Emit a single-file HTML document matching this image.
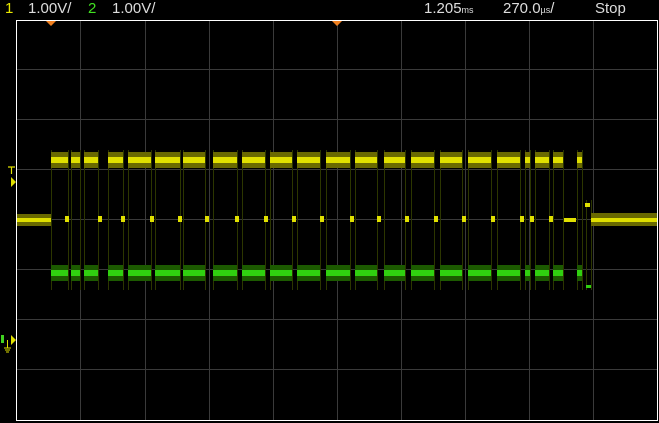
<!DOCTYPE html>
<html><head><style>
body{margin:0;background:#000;width:659px;height:423px;overflow:hidden;font-family:"Liberation Sans Narrow","Liberation Sans",sans-serif;}
.t{position:absolute;top:0px;font-size:15px;color:#ddd;line-height:18px;}
</style></head><body>
<div class="t" style="left:5px;color:#e8e800">1</div>
<div class="t" style="left:28px">1.00V/</div>
<div class="t" style="left:88px;color:#40e020">2</div>
<div class="t" style="left:112px">1.00V/</div>
<div class="t" style="left:424px">1.205<span style="font-size:9px">ms</span></div>
<div class="t" style="left:503px">270.0<span style="font-size:9px">µs</span>/</div>
<div class="t" style="left:595px">Stop</div>
<svg width="659" height="423" style="position:absolute;left:0;top:0">
<g stroke="#3a3a3a" stroke-width="1">
<path d="M80.5 20V420M145.5 20V420M209.5 20V420M273.5 20V420M337.5 20V420M401.5 20V420M465.5 20V420M529.5 20V420M593.5 20V420"/>
<path d="M16 69.5H657M16 119.5H657M16 169.5H657M16 219.5H657M16 269.5H657M16 319.5H657M16 369.5H657"/>
</g>
<rect x="16.5" y="20.5" width="641" height="400" fill="none" stroke="#fff" stroke-width="1"/>
<path d="M46 21h10l-5 5z M332 21h10l-5 5z" fill="#f08020"/>
<g stroke="#2c3600" stroke-width="1">
<path d="M51.5 150V290M68.5 150V290M71.5 150V290M80.5 150V290M84.5 150V290M98.5 150V290M108.5 150V290M123.5 150V290M128.5 150V290M151.5 150V290M155.5 150V290M180.5 150V290M183.5 150V290M205.5 150V290M213.5 150V290M237.5 150V290M242.5 150V290M265.5 150V290M270.5 150V290M292.5 150V290M297.5 150V290M320.5 150V290M326.5 150V290M350.5 150V290M355.5 150V290M377.5 150V290M384.5 150V290M405.5 150V290M411.5 150V290M434.5 150V290M440.5 150V290M462.5 150V290M468.5 150V290M491.5 150V290M497.5 150V290M520.5 150V290M525.5 150V290M530.5 150V290M535.5 150V290M549.5 150V290M553.5 150V290M563.5 150V290M577.5 150V290M582.5 150V290M586.5 200V290M591.5 200V290"/>
</g>
<g fill="#6a6a00">
<path d="M51 152h17v16h-17zM71 152h9v16h-9zM84 152h14v16h-14zM108 152h15v16h-15zM128 152h23v16h-23zM155 152h25v16h-25zM183 152h22v16h-22zM213 152h24v16h-24zM242 152h23v16h-23zM270 152h22v16h-22zM297 152h23v16h-23zM326 152h24v16h-24zM355 152h22v16h-22zM384 152h21v16h-21zM411 152h23v16h-23zM440 152h22v16h-22zM468 152h23v16h-23zM497 152h23v16h-23zM525 152h5v16h-5zM535 152h14v16h-14zM553 152h10v16h-10zM577 152h5v16h-5z"/>
<path d="M17 214h34v12h-34zM591 213h66v13h-66z"/>
</g>
<g fill="#e0e000">
<path d="M51 157h17v6h-17zM71 157h9v6h-9zM84 157h14v6h-14zM108 157h15v6h-15zM128 157h23v6h-23zM155 157h25v6h-25zM183 157h22v6h-22zM213 157h24v6h-24zM242 157h23v6h-23zM270 157h22v6h-22zM297 157h23v6h-23zM326 157h24v6h-24zM355 157h22v6h-22zM384 157h21v6h-21zM411 157h23v6h-23zM440 157h22v6h-22zM468 157h23v6h-23zM497 157h23v6h-23zM525 157h5v6h-5zM535 157h14v6h-14zM553 157h10v6h-10zM577 157h5v6h-5z"/>
<path d="M17 218h34v4h-34zM591 218h66v4h-66zM564 218h12v4h-12zM585 203h5v4h-5z"/>
<path d="M65 216h4v6h-4zM98 216h4v6h-4zM121 216h4v6h-4zM150 216h4v6h-4zM178 216h4v6h-4zM205 216h4v6h-4zM235 216h4v6h-4zM264 216h4v6h-4zM292 216h4v6h-4zM320 216h4v6h-4zM350 216h4v6h-4zM377 216h4v6h-4zM405 216h4v6h-4zM434 216h4v6h-4zM462 216h4v6h-4zM491 216h4v6h-4zM520 216h4v6h-4zM530 216h4v6h-4zM549 216h4v6h-4z"/>
</g>
<g fill="#1c5a00">
<path d="M51 265h17v16h-17zM71 265h9v16h-9zM84 265h14v16h-14zM108 265h15v16h-15zM128 265h23v16h-23zM155 265h25v16h-25zM183 265h22v16h-22zM213 265h24v16h-24zM242 265h23v16h-23zM270 265h22v16h-22zM297 265h23v16h-23zM326 265h24v16h-24zM355 265h22v16h-22zM384 265h21v16h-21zM411 265h23v16h-23zM440 265h22v16h-22zM468 265h23v16h-23zM497 265h23v16h-23zM525 265h5v16h-5zM535 265h14v16h-14zM553 265h10v16h-10zM577 265h5v16h-5z"/>
</g>
<g fill="#30d010">
<path d="M51 270h17v6h-17zM71 270h9v6h-9zM84 270h14v6h-14zM108 270h15v6h-15zM128 270h23v6h-23zM155 270h25v6h-25zM183 270h22v6h-22zM213 270h24v6h-24zM242 270h23v6h-23zM270 270h22v6h-22zM297 270h23v6h-23zM326 270h24v6h-24zM355 270h22v6h-22zM384 270h21v6h-21zM411 270h23v6h-23zM440 270h22v6h-22zM468 270h23v6h-23zM497 270h23v6h-23zM525 270h5v6h-5zM535 270h14v6h-14zM553 270h10v6h-10zM577 270h5v6h-5zM586 285h5v3h-5z"/>
</g>
<path d="M8 167h7M11.5 167v7" stroke="#e0e000" stroke-width="1.2"/>
<path d="M11 177l5 5l-5 5z M11 335l5 5l-5 5z" fill="#e0e000"/>
<path d="M4 348h7M5 350h5M6 352h3M7.5 340v8" stroke="#e0e000" stroke-width="1"/>
<path d="M1 335h3v8h-3z" fill="#40d020"/>
</svg>
</body></html>
